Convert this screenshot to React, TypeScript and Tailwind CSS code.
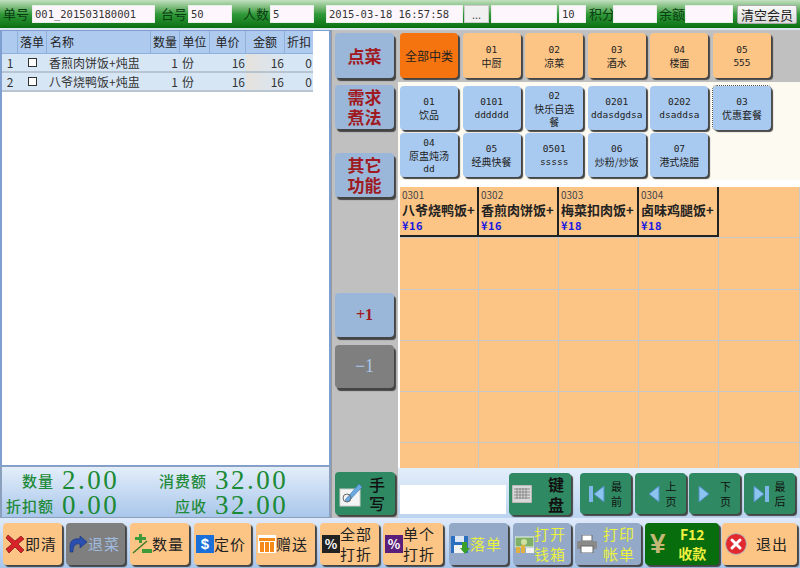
import React from 'react';

const font = '[font-family:"Noto_Sans_CJK_SC","Liberation_Sans",sans-serif]';
const mono = '[font-family:"DejaVu_Sans_Mono","Noto_Sans_CJK_SC",monospace]';

const Field = ({ w, value = '' }: { w: string; value?: string }) => (
  <div className={`${w} h-[18px] bg-[#fdf7fd] border border-[#e8efe8] pl-[2px] text-[10.5px] leading-[16px] text-[#333] overflow-hidden whitespace-nowrap ${mono}`}>
    {value}
  </div>
);

const TopLabel = ({ children, cls }: { children: React.ReactNode; cls: string }) => (
  <span className={`text-[13px] leading-[18px] text-[#0b3d12] whitespace-nowrap ${cls}`}>{children}</span>
);

const TopBar = () => (
  <div className="h-[28px] flex items-center bg-gradient-to-b from-[#c3e0c0] via-[#2f9a3a] to-[#08700f]">
    <TopLabel cls="ml-[3px] w-[29px]">单号</TopLabel>
    <Field w="w-[123px]" value="001_201503180001" />
    <TopLabel cls="ml-[6px] w-[27px]">台号</TopLabel>
    <Field w="w-[44px]" value="50" />
    <TopLabel cls="ml-[11px] w-[27px]">人数</TopLabel>
    <Field w="w-[44px]" value="5" />
    <div className="w-[12px]" />
    <Field w="w-[137px]" value="2015-03-18 16:57:58" />
    <div className="ml-px w-[25px] h-[18px] bg-[#f0f0f0] border border-[#ccc] text-center text-[11px] leading-[16px] text-[#555]">...</div>
    <div className="w-[2px]" />
    <Field w="w-[66px]" />
    <div className="w-[2px]" />
    <Field w="w-[27px]" value="10" />
    <TopLabel cls="ml-[3px] w-[24px]">积分</TopLabel>
    <Field w="w-[44px]" />
    <TopLabel cls="ml-[2px] w-[26px]">余额</TopLabel>
    <Field w="w-[48px]" />
    <div className="ml-[4px] w-[60px] h-[19px] bg-gradient-to-b from-[#fafafa] to-[#dcdcdc] border border-[#aaa] rounded-[2px] text-center text-[13px] leading-[17px] text-[#222]">清空会员</div>
  </div>
);

const columns = 'grid grid-cols-[16px_29px_104px_29px_30px_36px_39px_28px]';

const rows = [
  { no: 1, name: '香煎肉饼饭+炖盅' },
  { no: 2, name: '八爷烧鸭饭+炖盅' },
];

const OrderTable = () => (
  <div className="h-[436px] bg-white border border-[#7f9fd0] border-r-2 border-l-2 overflow-hidden">
    <div className={`${columns} w-[311px] h-[23px] bg-[#aecbef] text-[12px] leading-[22px] text-[#222] border-b border-[#8fb0dd]`}>
      <div className="border-r border-[#90b0dc]" />
      <div className="border-r border-[#90b0dc] text-center">落单</div>
      <div className="border-r border-[#90b0dc] pl-[3px]">名称</div>
      <div className="border-r border-[#90b0dc] text-center">数量</div>
      <div className="border-r border-[#90b0dc] text-center">单位</div>
      <div className="border-r border-[#90b0dc] text-center">单价</div>
      <div className="border-r border-[#90b0dc] text-center">金额</div>
      <div className="text-center">折扣</div>
    </div>
    {rows.map((r) => (
      <div key={r.no} className={`${columns} w-[311px] h-[19px] bg-[#d7e6f5] border-b-2 border-[#b8c4d0] text-[12px] leading-[17px] text-[#333]`}>
        <div className="text-center">{r.no}</div>
        <div className="flex items-center justify-center">
          <div className="w-[9px] h-[9px] border border-[#333] bg-white" />
        </div>
        <div className="pl-[2px] whitespace-nowrap">{r.name}</div>
        <div className="text-right pr-[2px]">1</div>
        <div className="pl-[2px]">份</div>
        <div className="text-right pr-[1px]">16</div>
        <div className="text-right pr-[1px] bg-gradient-to-r from-[#e6e2dc] to-[#d7e6f5]">16</div>
        <div className="text-right pr-[1px]">0</div>
      </div>
    ))}
  </div>
);

const SumText = ({ label, value, lw }: { label: string; value: string; lw: string }) => (
  <div className="flex items-center h-[25px]">
    <span className={`${lw} text-right text-[15px] leading-[20px] tracking-[1px] font-medium text-[#1f8a3a] whitespace-nowrap`}>{label}</span>
    <span className="ml-[8px] text-[27px] leading-[25px] tracking-[2.5px] text-[#1b8a35] [font-family:'Liberation_Serif',serif]">{value}</span>
  </div>
);

const Summary = () => (
  <div className="h-[52px] bg-gradient-to-b from-[#e3eefa] to-[#a9c6ea] border border-[#8aa0bd] border-l-2 border-r-2 flex pt-[1px]">
    <div className="w-[143px]">
      <SumText label="数量" value="2.00" lw="w-[52px]" />
      <SumText label="折扣额" value="0.00" lw="w-[52px]" />
    </div>
    <div>
      <SumText label="消费额" value="32.00" lw="w-[62px]" />
      <SumText label="应收" value="32.00" lw="w-[62px]" />
    </div>
  </div>
);

const SideBtn = ({ text, cls = '', gray = false }: { text: string; cls?: string; gray?: boolean }) => (
  <div className={`w-[59px] rounded-[4px] shadow-[2px_3px_1px_#444] flex items-center justify-center text-center ${gray ? 'bg-[#7f7f7f] text-[#a8c8e8]' : 'bg-[#9ab6d8] text-[#a01a22]'} ${cls}`}>
    {text}
  </div>
);

const SideBar = () => (
  <div className="w-[67px] h-[438px] bg-[#c0c0c0] border-l border-[#9a9a9a] pl-[3px] flex flex-col">
    <SideBtn text="点菜" cls="mt-[3px] h-[45px] text-[17px] font-bold" />
    <SideBtn text="需求煮法" cls="mt-[7px] h-[44px] text-[17px] font-bold leading-[20px] px-[10px]" />
    <SideBtn text="其它功能" cls="mt-[24px] h-[44px] text-[17px] font-bold leading-[20px] px-[10px]" />
    <SideBtn text="+1" cls="mt-[96px] h-[44px] text-[16px] font-bold [font-family:'Liberation_Serif',serif]" />
    <SideBtn text="−1" gray cls="mt-[8px] h-[43px] text-[18px] [font-family:'Liberation_Serif',serif]" />
  </div>
);

const PadBtn = ({ lines, cls }: { lines: string[]; cls: string }) => (
  <div className={`w-[58px] rounded-[4px] shadow-[2px_2px_1px_#444] flex flex-col items-center justify-center leading-[13px] text-[#222] text-center whitespace-nowrap ${cls}`}>
    {lines.map((l) => (
      <div key={l} className={/^[\x00-\x7f]+$/.test(l) ? `text-[9.5px] ${mono}` : 'text-[10px]'}>{l}</div>
    ))}
  </div>
);

const cats = [['01', '中厨'], ['02', '凉菜'], ['03', '酒水'], ['04', '楼面'], ['05', '555']];
const subs = [
  ['01', '饮品'], ['0101', 'dddddd'], ['02', '快乐自选', '餐'], ['0201', 'ddasdgdsa'], ['0202', 'dsaddsa'], ['03', '优惠套餐'],
  ['04', '原盅炖汤', 'dd'], ['05', '经典快餐'], ['0501', 'sssss'], ['06', '炒粉/炒饭'], ['07', '港式烧腊'],
];

const dishes = [
  { code: '0301', name: '八爷烧鸭饭+', price: '¥16' },
  { code: '0302', name: '香煎肉饼饭+', price: '¥16' },
  { code: '0303', name: '梅菜扣肉饭+', price: '¥18' },
  { code: '0304', name: '卤味鸡腿饭+', price: '¥18' },
];

const Menu = () => (
  <div className="flex-1 flex flex-col">
    <div className="h-[52px] bg-[#c0c0c0] pl-[2px] pt-[3px] flex gap-[4.6px]">
      <div className="w-[58px] h-[45px] rounded-[4px] bg-[#f57410] shadow-[2px_2px_1px_#444] flex items-center justify-center text-[12px] text-[#222]">全部中类</div>
      {cats.map((c) => (
        <PadBtn key={c[0]} lines={c} cls="h-[45px] bg-[#fdc585]" />
      ))}
    </div>
    <div className="h-[98px] bg-[#fdfaf2] pl-[2px] pt-[4px] grid grid-cols-[repeat(6,58px)] gap-x-[4.6px] gap-y-[3px] content-start">
      {subs.map((s, i) => (
        <PadBtn
          key={s[0] + s[1]}
          lines={s}
          cls={`h-[44px] bg-[#a9caf0] ${i === 5 ? 'outline-1 outline-dotted outline-[#555]' : ''}`}
        />
      ))}
    </div>
    <div className="h-[7px] bg-white" />
    <div className="h-[281px] pl-[2px] bg-white overflow-hidden">
      <div className="grid grid-cols-[79px_80px_80px_80px_81px] auto-rows-[50.3px] gap-y-px bg-[#c8c8c8]">
        {Array.from({ length: 30 }).map((_, i) => {
          const d = dishes[i];
          return (
            <div key={i} className={d ? 'bg-[#fdc585] border-r-2 border-b-2 border-[#222] pl-[2px] pt-[1px] text-[#222]' : 'bg-[#fdc585] border-r border-[#c8c8c8]'}>
              {d && (
                <>
                  <div className="text-[10px] leading-[13px] text-[#444]">{d.code}</div>
                  <div className="text-[13px] leading-[17px] font-bold whitespace-nowrap overflow-hidden">{d.name}</div>
                  <div className="text-[11px] leading-[14px] font-bold text-[#1a1ae0] tracking-[0.5px]">{d.price}</div>
                </>
              )}
            </div>
          );
        })}
      </div>
    </div>
    <InputBar />
  </div>
);

const PageBtn = ({ top, bottom, dir }: { top: string; bottom: string; dir: 'first' | 'prev' | 'next' | 'last' }) => (
  <div className="w-[51px] h-[41px] rounded-[4px] bg-[#2f8a63] shadow-[2px_2px_1px_#444] flex items-center justify-center gap-[6px]">
    <svg width="16" height="18" viewBox="0 0 16 18">
      {dir === 'first' && <rect x="0" y="1" width="4" height="16" fill="#7fb8e8" />}
      {dir === 'last' && <rect x="12" y="1" width="4" height="16" fill="#7fb8e8" />}
      {dir === 'first' || dir === 'prev' ? (
        <polygon points="15,1 15,17 5,9" fill="#8cc4f0" stroke="#4f8fc0" />
      ) : (
        <polygon points="1,1 1,17 11,9" fill="#8cc4f0" stroke="#4f8fc0" />
      )}
    </svg>
    <div className="text-[11px] leading-[15px] text-[#111] text-center">
      <div>{top}</div>
      <div>{bottom}</div>
    </div>
  </div>
);

const InputBar = () => (
  <div className="h-[50px] bg-gradient-to-b from-[#e3eefa] to-[#bcd4f0] pt-[5px] flex items-start">
    <div className="ml-[2px] mt-[12px] w-[106px] h-[29px] bg-white" />
    <div className="ml-[3px] w-[62px] h-[42px] rounded-[4px] bg-[#2f8a63] shadow-[2px_2px_1px_#444] flex items-center pl-[3px]">
      <svg width="20" height="18" viewBox="0 0 20 18">
        <rect width="20" height="18" fill="#d8d8d8" stroke="#999" />
        <path d="M2 4h16M2 7h16M2 10h16M2 13h16M5 3v11M8 3v11M11 3v11M14 3v11" stroke="#8a8a8a" strokeWidth="1" />
      </svg>
      <div className="ml-[16px] text-[16px] leading-[20px] font-bold text-[#111]">
        <div>键</div>
        <div>盘</div>
      </div>
    </div>
    <div className="ml-[9px] flex gap-[3.5px]">
      <PageBtn top="最" bottom="前" dir="first" />
      <PageBtn top="上" bottom="页" dir="prev" />
      <PageBtn top="下" bottom="页" dir="next" />
      <PageBtn top="最" bottom="后" dir="last" />
    </div>
  </div>
);

const icons: Record<string, React.ReactNode> = {
  clear: (
    <svg width="20" height="20" viewBox="0 0 20 20">
      <path d="M3 1l7 6 6-5 3 3-6 5 6 6-3 3-6-6-6 6-3-4 6-5-6-6z" fill="#d8232a" stroke="#7a1515" strokeWidth="0.7" />
    </svg>
  ),
  back: (
    <svg width="20" height="18" viewBox="0 0 20 18">
      <path d="M2 17V11C2 5 7 3 12 4V1l7 6-7 6V9C8 8 5 10 5 17z" fill="#2a4fae" stroke="#12307a" strokeWidth="0.6" />
    </svg>
  ),
  qty: (
    <svg width="20" height="22" viewBox="0 0 20 22">
      <path d="M3 4h4V1h3v3h4v3h-4v3H7V7H3z" fill="#3f9a3a" />
      <path d="M1 20L15 8" stroke="#3a7a2a" strokeWidth="1.5" />
      <rect x="10" y="16" width="10" height="4" fill="#3f9a3a" />
    </svg>
  ),
  price: (
    <div className="w-[18px] h-[18px] bg-[#1a6fd8] text-white text-[15px] leading-[18px] font-bold text-center [font-family:'Liberation_Sans',sans-serif]">$</div>
  ),
  gift: (
    <svg width="18" height="18" viewBox="0 0 18 18">
      <rect width="18" height="18" fill="#fff" />
      <path d="M1 3h16v3H1zM2 7h4v10H2zM7 7h4v10H7zM12 7h4v10h-4z" fill="#f58a1a" />
    </svg>
  ),
  allPct: <div className="w-[18px] h-[18px] bg-[#222] text-white text-[13px] leading-[18px] font-bold text-center">%</div>,
  onePct: <div className="w-[18px] h-[18px] bg-[#5a1f7a] text-white text-[13px] leading-[18px] font-bold text-center">%</div>,
  save: (
    <svg width="19" height="19" viewBox="0 0 19 19">
      <rect width="17" height="17" y="1" fill="#2a6fc0" />
      <rect x="4" y="1" width="9" height="6" fill="#dfe8f2" />
      <rect x="3" y="10" width="11" height="8" fill="#f2f2f2" />
      <path d="M11 7h5v6h3l-5 6-5-6h2z" fill="#3aa02a" />
    </svg>
  ),
  cash: (
    <svg width="19" height="19" viewBox="0 0 19 19">
      <rect y="2" width="19" height="10" fill="#7fb06a" stroke="#eef4e4" />
      <circle cx="9" cy="7" r="3" fill="#cfe0a0" />
      <rect x="1" y="12" width="4" height="6" fill="#e0b040" />
      <rect x="6" y="10" width="4" height="8" fill="#e0b040" />
      <rect x="11" y="13" width="8" height="5" fill="#f2f2f2" />
    </svg>
  ),
  print: (
    <svg width="20" height="18" viewBox="0 0 20 18">
      <rect x="5" y="0" width="10" height="6" fill="#fff" stroke="#666" />
      <rect x="0" y="6" width="20" height="8" rx="1" fill="#8a8a8a" />
      <rect x="4" y="11" width="12" height="7" fill="#fff" stroke="#666" />
    </svg>
  ),
  exit: (
    <svg width="22" height="22" viewBox="0 0 22 22">
      <circle cx="11" cy="11" r="10.5" fill="#e02a30" stroke="#b8b8b8" />
      <path d="M7 7l8 8M15 7l-8 8" stroke="#fff" strokeWidth="3" strokeLinecap="round" />
    </svg>
  ),
};

type Tool = { cls: string; icon: string; text: string[]; tone: 'orange' | 'dis' | 'blue' };

const tools: Tool[] = [
  { cls: 'w-[59px]', icon: 'clear', text: ['即清'], tone: 'orange' },
  { cls: 'w-[59px] ml-[4px]', icon: 'back', text: ['退菜'], tone: 'dis' },
  { cls: 'w-[59px] ml-[5px]', icon: 'qty', text: ['数量'], tone: 'orange' },
  { cls: 'w-[57px] ml-[5px]', icon: 'price', text: ['定价'], tone: 'orange' },
  { cls: 'w-[59px] ml-[5px]', icon: 'gift', text: ['赠送'], tone: 'orange' },
  { cls: 'w-[59px] ml-[5px]', icon: 'allPct', text: ['全部', '打折'], tone: 'orange' },
  { cls: 'w-[60px] ml-[4px]', icon: 'onePct', text: ['单个', '打折'], tone: 'orange' },
  { cls: 'w-[59px] ml-[6px]', icon: 'save', text: ['落单'], tone: 'blue' },
  { cls: 'w-[58px] ml-[5px]', icon: 'cash', text: ['打开', '钱箱'], tone: 'blue' },
  { cls: 'w-[66px] ml-[4px]', icon: 'print', text: ['打印', '帐单'], tone: 'blue' },
];

const toneCls = {
  orange: 'bg-[#fdc585] text-[#222]',
  dis: 'bg-[#7f7f7f] text-[#a0bce0]',
  blue: 'bg-[#94a9c8] text-[#e8f040]',
};

const ToolBar = () => (
  <div className="h-[50px] bg-gradient-to-b from-[#dfeafa] to-[#a8c6ec] pl-[3px] pt-[5px] flex">
    {tools.map((t) => (
      <div key={t.icon} className={`${t.cls} h-[42px] rounded-[4px] shadow-[2px_2px_1px_#444] flex items-center pl-[2px] ${toneCls[t.tone]}`}>
        {icons[t.icon]}
        <div className={`text-[15px] leading-[20px] tracking-[1px] whitespace-nowrap ${t.icon === 'print' ? 'flex-1 text-center' : ''}`}>
          {t.text.map((l) => (
            <div key={l}>{l}</div>
          ))}
        </div>
      </div>
    ))}
    <div className="ml-[4px] w-[74px] h-[42px] rounded-[4px] shadow-[2px_2px_1px_#444] flex items-center pl-[5px] bg-[#086d0c] text-[#f0f040]">
      <span className="text-[28px] font-bold text-[#c4b878] leading-[28px] [font-family:'Liberation_Sans',sans-serif]">¥</span>
      <div className="flex-1 text-center text-[14px] leading-[19px] font-bold">
        <div>F12</div>
        <div>收款</div>
      </div>
    </div>
    <div className="ml-[3px] w-[75px] h-[42px] rounded-[4px] shadow-[2px_2px_1px_#444] flex items-center pl-[3px] bg-[#fdc585] text-[#222]">
      {icons.exit}
      <div className="flex-1 text-center text-[15px] tracking-[1px]">退出</div>
    </div>
  </div>
);

const ManualBtn = () => (
  <div className="h-[50px] w-[67px] bg-[#c0c0c0] border-l border-[#9a9a9a] pl-[3px] pt-[4px]">
    <div className="w-[60px] h-[43px] rounded-[4px] bg-[#2f8a63] shadow-[2px_2px_1px_#444] flex items-center pl-[3px]">
      <svg width="26" height="26" viewBox="0 0 26 26">
        <rect x="2" y="8" width="20" height="17" fill="#f4f4f4" stroke="#ccc" />
        <path d="M7 19L21 3l3 3L10 21z" fill="#6aa8e0" stroke="#3a78b0" strokeWidth="0.6" />
        <circle cx="9" cy="17" r="4" fill="none" stroke="#666" />
      </svg>
      <div className="ml-[5px] text-[16px] leading-[19px] font-medium text-[#111]">
        <div>手</div>
        <div>写</div>
      </div>
    </div>
  </div>
);

export default function App() {
  return (
    <div className={`w-[800px] h-[568px] overflow-hidden bg-[#c0c0c0] flex flex-col ${font}`}>
      <TopBar />
      <div className="h-[2px] bg-[#dce6f0]" />
      <div className="h-[488px] flex">
        <div className="w-[331px] flex flex-col bg-[#c8d4e4]">
          <OrderTable />
          <Summary />
        </div>
        <div className="flex flex-col">
          <SideBar />
          <ManualBtn />
        </div>
        <Menu />
      </div>
      <ToolBar />
    </div>
  );
}
